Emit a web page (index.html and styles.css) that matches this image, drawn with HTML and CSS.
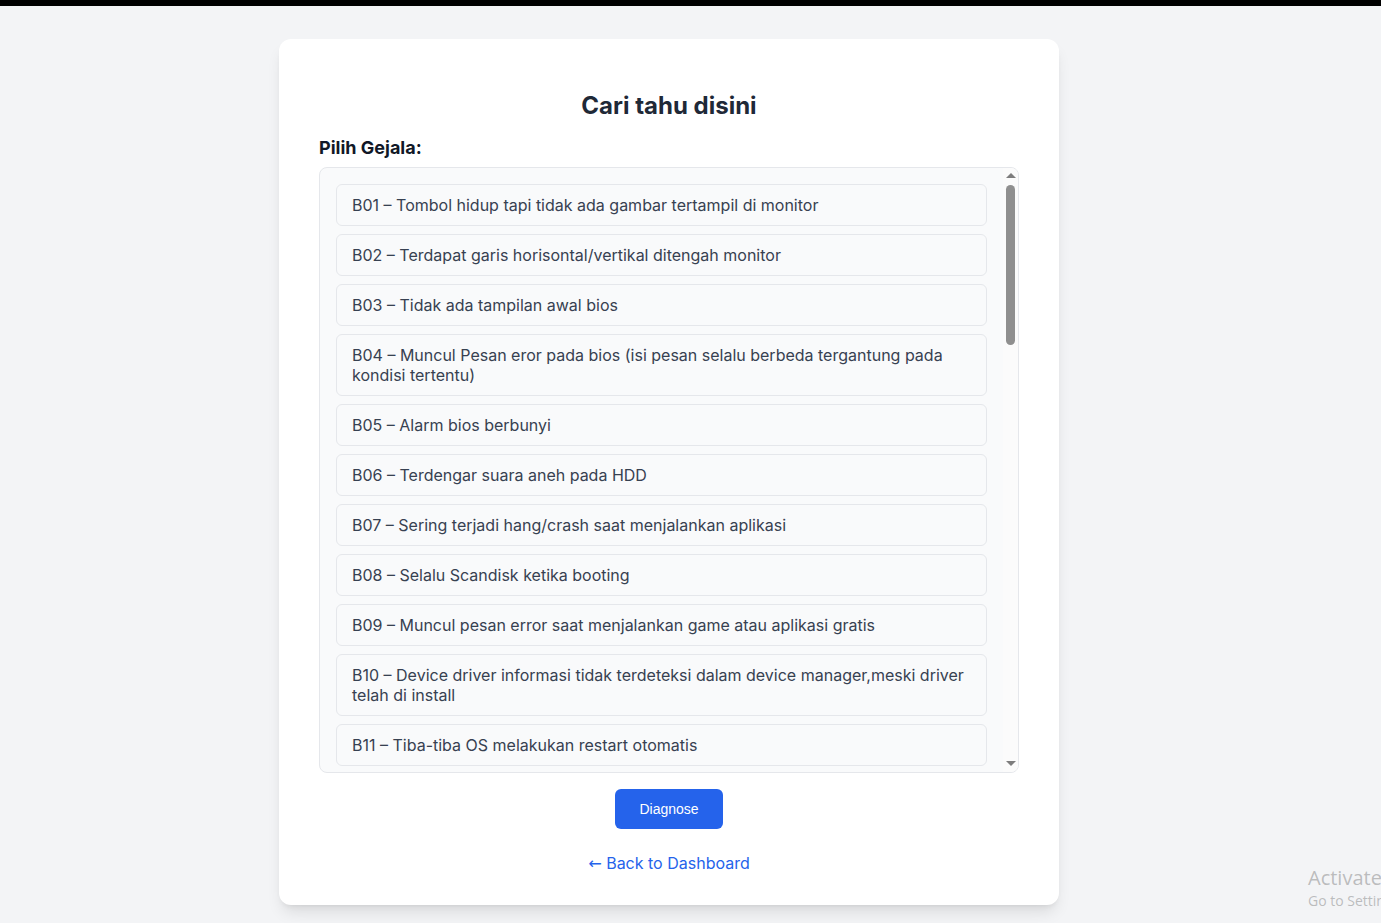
FILE: index.html
```html
<!DOCTYPE html>
<html lang="id">
<head>
<meta charset="utf-8">
<title>Cari tahu disini</title>
<link rel="stylesheet" href="styles.css">
</head>
<body>
<div class="topbar"></div>
<main class="page">
  <section class="card">
    <h1 class="title">Cari tahu disini</h1>
    <form class="form">
      <label class="label">Pilih Gejala:</label>
      <div class="list">
        <div class="list-scroll">
          <div class="item">B01 – Tombol hidup tapi tidak ada gambar tertampil di monitor</div>
          <div class="item">B02 – Terdapat garis horisontal/vertikal ditengah monitor</div>
          <div class="item">B03 – Tidak ada tampilan awal bios</div>
          <div class="item">B04 – Muncul Pesan eror pada bios (isi pesan selalu berbeda tergantung pada kondisi tertentu)</div>
          <div class="item">B05 – Alarm bios berbunyi</div>
          <div class="item">B06 – Terdengar suara aneh pada HDD</div>
          <div class="item">B07 – Sering terjadi hang/crash saat menjalankan aplikasi</div>
          <div class="item">B08 – Selalu Scandisk ketika booting</div>
          <div class="item">B09 – Muncul pesan error saat menjalankan game atau aplikasi gratis</div>
          <div class="item">B10 – Device driver informasi tidak terdeteksi dalam device manager,meski driver telah di install</div>
          <div class="item">B11 – Tiba-tiba OS melakukan restart otomatis</div>
          <div class="item">B12 – Keluarnya blue screen pada OS Windows</div>
        </div>
        <div class="scrollbar" aria-hidden="true">
          <div class="sb-btn sb-up"></div>
          <div class="sb-track"><div class="sb-thumb"></div></div>
          <div class="sb-btn sb-down"></div>
        </div>
      </div>
      <div class="actions">
        <button type="button" class="btn">Diagnose</button>
      </div>
      <div class="back">
        <a href="#" class="back-link"><span class="arrow">←</span> Back to Dashboard</a>
      </div>
    </form>
  </section>
</main>
<div class="watermark">
  <div class="wm-title">Activate Windows</div>
  <div class="wm-sub">Go to Settings to activate Windows.</div>
</div>
</body>
</html>
```

FILE: styles.css
```css
* { box-sizing: border-box; }
html, body {
  margin: 0;
  padding: 0;
  height: 100%;
}
body {
  background: #f3f4f6;
  font-family: Inter, "Noto Sans", sans-serif;
  color: #1f2937;
  overflow: hidden;
}
.topbar {
  height: 6px;
  background: #000;
}
.page {
  display: flex;
  justify-content: center;
  padding-top: 33px;
  padding-right: 43px;
}
.card {
  width: 780px;
  background: #fff;
  border-radius: 12px;
  box-shadow: 0 10px 15px -3px rgba(0,0,0,0.1), 0 4px 6px -4px rgba(0,0,0,0.1);
  padding: 51px 40px 29px;
}
.title {
  margin: 0;
  text-align: center;
  font-size: 24px;
  line-height: 32px;
  font-weight: 700;
  color: #1f2937;
}
.form {
  display: flex;
  flex-direction: column;
}
.label {
  display: block;
  margin-top: 12px;
  font-size: 18px;
  line-height: 28px;
  font-weight: 700;
  color: #111827;
}
.list {
  margin-top: 5px;
  height: 606px;
  display: flex;
  overflow: hidden;
  border: 1px solid #e5e7eb;
  border-radius: 8px;
  background: #f9fafb;
}
.list-scroll {
  flex: 1;
  min-width: 0;
  overflow: hidden;
  padding: 16px;
  display: flex;
  flex-direction: column;
  gap: 8px;
}
.item {
  flex: none;
  border: 1px solid #e5e7eb;
  border-radius: 6px;
  background: #f9fafb;
  padding: 10px 15px;
  font-size: 16px;
  line-height: 20px;
  color: #374151;
}
.scrollbar {
  flex: none;
  width: 15px;
  display: flex;
  flex-direction: column;
  background: #fbfbfb;
}
.sb-btn {
  flex: none;
  height: 16px;
  position: relative;
}
.sb-up::after,
.sb-down::after {
  content: "";
  position: absolute;
  left: 3px;
  width: 0;
  height: 0;
  border-left: 5px solid transparent;
  border-right: 5px solid transparent;
}
.sb-up::after {
  top: 5px;
  border-bottom: 5px solid #7d7d7d;
}
.sb-down::after {
  top: 5px;
  border-top: 5px solid #7d7d7d;
}
.sb-track {
  flex: 1;
  padding: 1px 3px 0;
}
.sb-thumb {
  width: 9px;
  height: 160px;
  border-radius: 5px;
  background: #8f8f8f;
}
.actions {
  display: flex;
  justify-content: center;
  margin-top: 16px;
}
.btn {
  width: 108px;
  height: 40px;
  border: none;
  border-radius: 6px;
  background: #2563eb;
  color: #fff;
  font-family: "Liberation Sans", Arial, sans-serif;
  font-size: 14px;
  font-weight: 500;
  cursor: pointer;
}
.back {
  text-align: center;
  margin-top: 22px;
  line-height: 24px;
}
.back-link {
  color: #2563eb;
  font-size: 16px;
  text-decoration: none;
}
.arrow {
  font-family: "DejaVu Sans", sans-serif;
}
.watermark {
  position: absolute;
  left: 1308px;
  top: 865px;
  white-space: nowrap;
  color: rgba(150,150,150,0.6);
  font-family: "Open Sans", "Noto Sans", sans-serif;
}
.wm-title {
  font-size: 20px;
  line-height: 26px;
}
.wm-sub {
  font-size: 14px;
  line-height: 20px;
}
```
